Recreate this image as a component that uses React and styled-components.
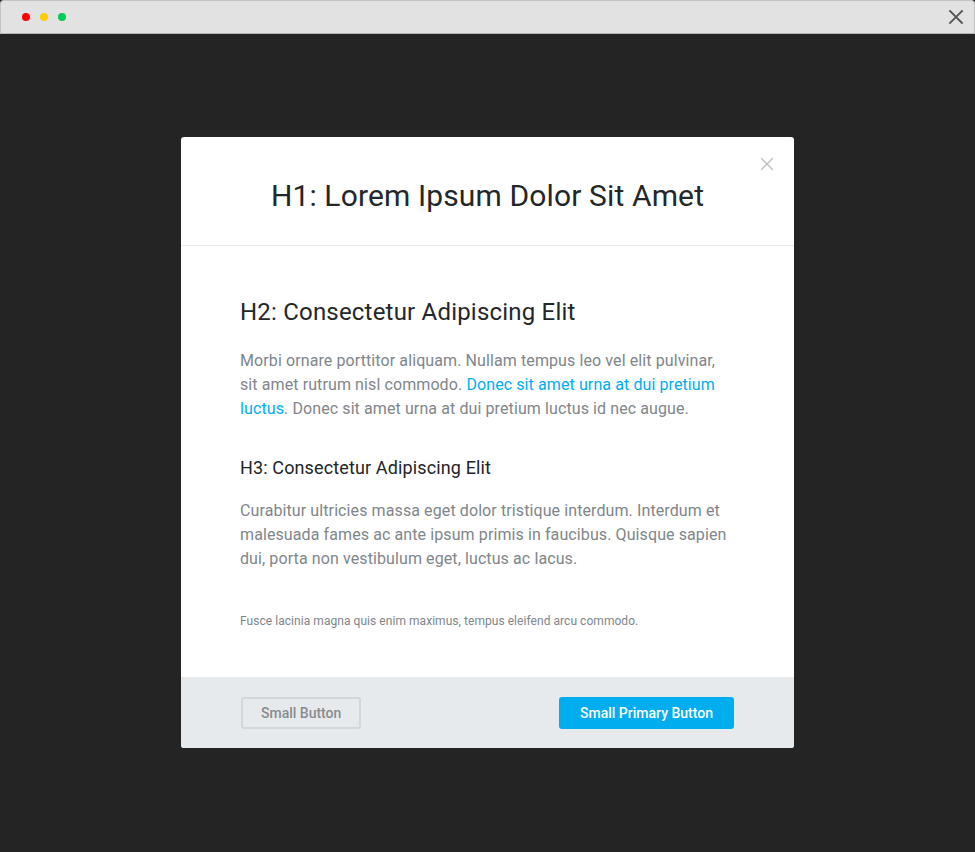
import React from "react";
import styled, { createGlobalStyle } from "styled-components";

const GlobalStyle = createGlobalStyle`
  html, body {
    margin: 0;
    padding: 0;
    height: 100%;
  }
  body {
    font-family: Roboto, "Liberation Sans", sans-serif;
    background: #242424;
  }
`;

const Frame = styled.div`
  display: flex;
  flex-direction: column;
  height: 852px;
  background: #242424;
`;

const TitleBar = styled.div`
  height: 34px;
  flex-shrink: 0;
  display: flex;
  align-items: center;
  justify-content: space-between;
  padding: 0 10px 0 21px;
  background: #e2e2e2;
  border: 1px solid #c4c4c4;
  border-bottom: 1px solid #b5b5b5;
  border-radius: 4px 4px 0 0;
  box-sizing: border-box;
`;

const Dots = styled.div`
  display: flex;
  gap: 10px;
`;

const Dot = styled.span`
  width: 8px;
  height: 8px;
  border-radius: 50%;
  background: ${(p) => p.color};
`;

const Stage = styled.div`
  flex: 1;
  display: flex;
  justify-content: center;
  padding-top: 103px;
`;

const Modal = styled.div`
  width: 613px;
  height: 611px;
  background: #fff;
  border-radius: 3px;
  display: flex;
  flex-direction: column;
  overflow: hidden;
`;

const Header = styled.div`
  position: relative;
  padding: 41px 60px 31px;
  border-bottom: 1px solid #e8e9ea;
  text-align: center;
`;

const CloseButton = styled.button`
  position: absolute;
  top: 19px;
  right: 19px;
  width: 16px;
  height: 16px;
  padding: 0;
  border: 0;
  background: none;
  cursor: pointer;
  display: flex;
  align-items: center;
  justify-content: center;
`;

const H1 = styled.h1`
  margin: 0;
  font-size: 30px;
  line-height: 36px;
  font-weight: 400;
  letter-spacing: 0.13px;
  color: #24272a;
`;

const Body = styled.div`
  flex: 1;
  padding: 50px 59px 0;
`;

const H2 = styled.h2`
  margin: 0 0 21px;
  font-size: 24px;
  line-height: 32px;
  font-weight: 400;
  letter-spacing: 0.2px;
  color: #24272a;
`;

const H3 = styled.h3`
  margin: 35px 0 19px;
  font-size: 18px;
  line-height: 24px;
  font-weight: 400;
  letter-spacing: 0.13px;
  color: #222427;
`;

const Para = styled.p`
  margin: 0;
  font-size: 16px;
  line-height: 24px;
  letter-spacing: 0.1px;
  color: #80868b;
`;

const Link = styled.a`
  color: #00aeef;
  text-decoration: none;
`;

const Small = styled.p`
  margin: 41px 0 0;
  font-size: 12px;
  line-height: 18px;
  letter-spacing: 0.05px;
  color: #80868b;
`;

const Footer = styled.div`
  height: 71px;
  flex-shrink: 0;
  box-sizing: border-box;
  background: #e7eaec;
  display: flex;
  align-items: center;
  justify-content: space-between;
  padding: 0 60px;
`;

const Button = styled.button`
  height: 32px;
  padding: 0 ${(p) => (p.primary ? "19px" : "18px")};
  border-radius: 3px;
  font-family: Roboto, "Liberation Sans", sans-serif;
  font-size: 14px;
  font-weight: 500;
  cursor: pointer;
  border: 2px solid ${(p) => (p.primary ? "#00aeef" : "#d4d7d9")};
  background: ${(p) => (p.primary ? "#00aeef" : "transparent")};
  color: ${(p) => (p.primary ? "#fff" : "#878b90")};
`;

const X = ({ size, color, width }) => (
  <svg width={size} height={size} viewBox="0 0 16 16">
    <path
      d="M2 2L14 14M14 2L2 14"
      stroke={color}
      strokeWidth={width}
      strokeLinecap="square"
    />
  </svg>
);

export default function App() {
  return (
    <>
      <GlobalStyle />
      <Frame>
        <TitleBar>
          <Dots>
            <Dot color="#ff0000" />
            <Dot color="#ffcc00" />
            <Dot color="#00cc55" />
          </Dots>
          <X size={16} color="#555" width={1.8} />
        </TitleBar>
        <Stage>
          <Modal>
            <Header>
              <H1>H1: Lorem Ipsum Dolor Sit Amet</H1>
              <CloseButton aria-label="Close">
                <X size={14} color="#bcbfc2" width={1.6} />
              </CloseButton>
            </Header>
            <Body>
              <H2>H2: Consectetur Adipiscing Elit</H2>
              <Para>
                Morbi ornare porttitor aliquam. Nullam tempus leo vel elit
                pulvinar, sit amet rutrum nisl commodo.{" "}
                <Link href="#">Donec sit amet urna at dui pretium luctus</Link>.
                Donec sit amet urna at dui pretium luctus id nec augue.
              </Para>
              <H3>H3: Consectetur Adipiscing Elit</H3>
              <Para>
                Curabitur ultricies massa eget dolor tristique interdum.
                Interdum et malesuada fames ac ante ipsum primis in faucibus.
                Quisque sapien dui, porta non vestibulum eget, luctus ac lacus.
              </Para>
              <Small>
                Fusce lacinia magna quis enim maximus, tempus eleifend arcu
                commodo.
              </Small>
            </Body>
            <Footer>
              <Button>Small Button</Button>
              <Button primary>Small Primary Button</Button>
            </Footer>
          </Modal>
        </Stage>
      </Frame>
    </>
  );
}
